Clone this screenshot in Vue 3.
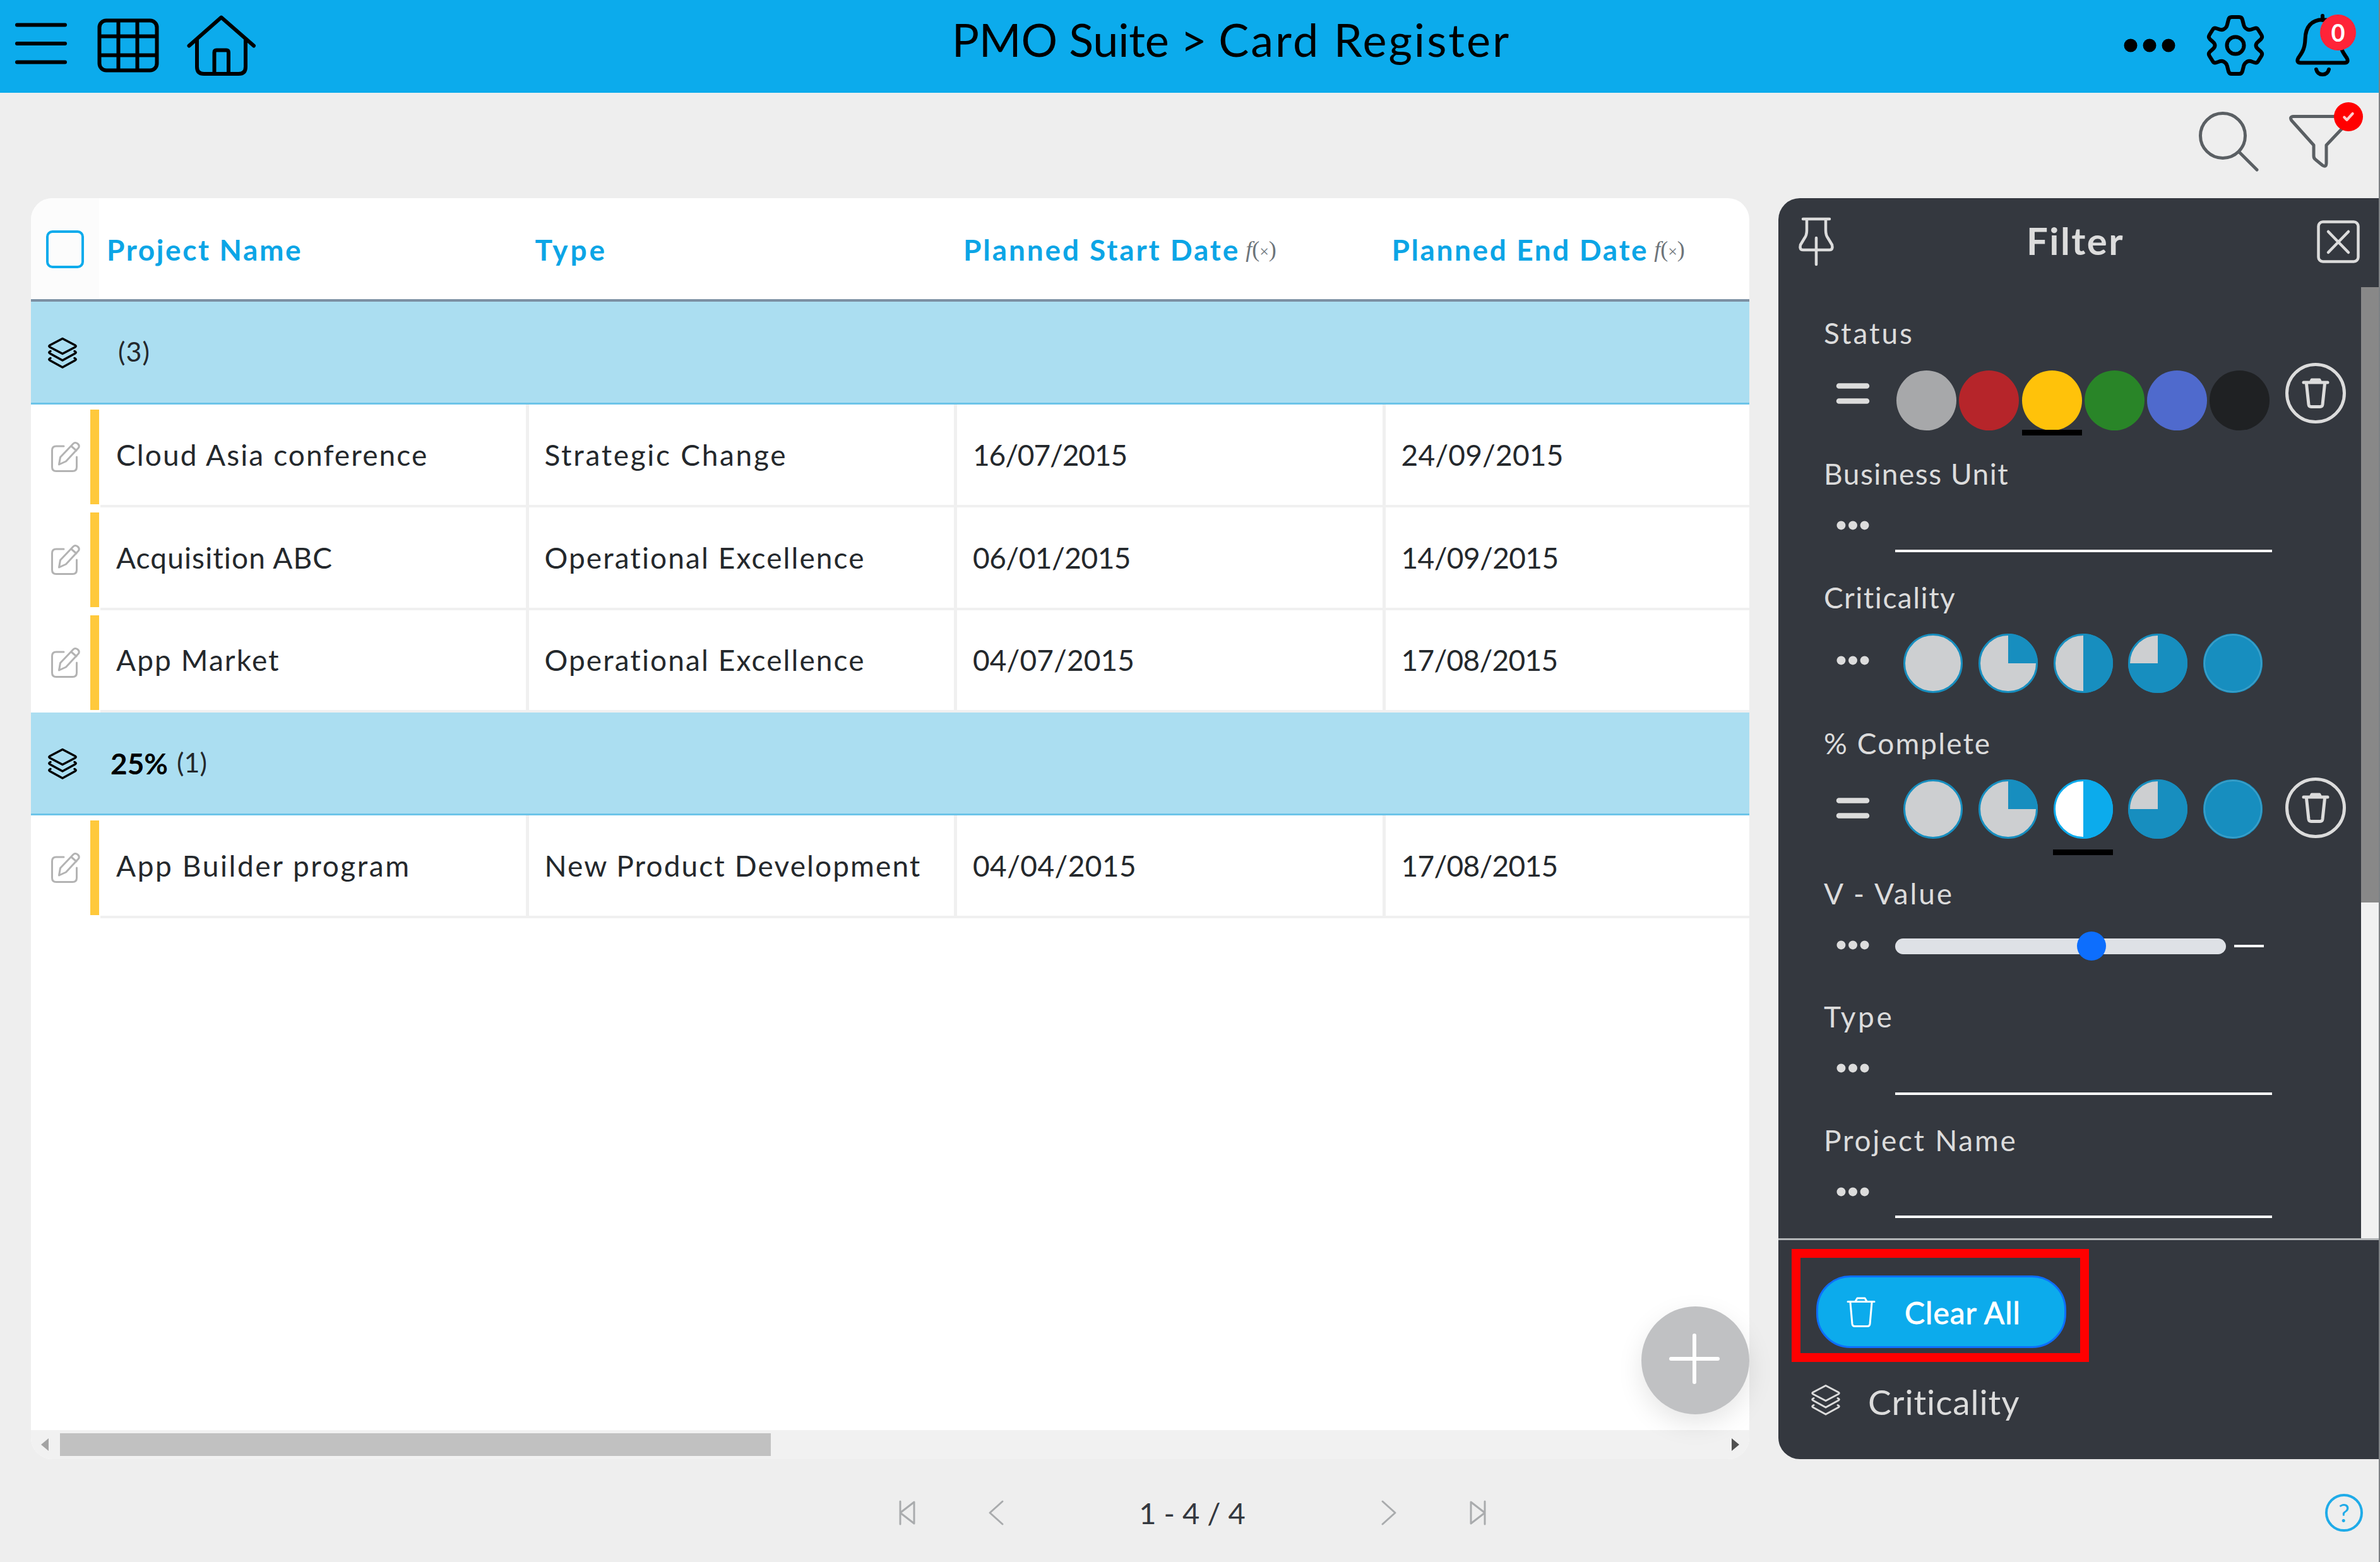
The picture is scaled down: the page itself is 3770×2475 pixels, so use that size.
<template>
  <div class="app">
    <header class="topbar">
      <div class="topbar-left">
        <svg class="ico-menu" viewBox="0 0 82 66"><path d="M3 3.5h76M3 33h76M3 62.5h76" /></svg>
        <svg class="ico-grid" viewBox="0 0 96 84">
          <rect x="2.5" y="2.5" width="91" height="79" rx="11" />
          <path d="M32.5 3v78M62.5 3v78M3 27.5h90M3 57.5h90" />
        </svg>
        <svg class="ico-home" viewBox="0 0 110 98">
          <path d="M3.500 49.500L54.500 4.500L106 49.500M16 40v43q0 11 11 11h55q11 0 11-11V40" />
          <path d="M43.500 94V60q0-3.500 3.500-3.500h15.500q3.500 0 3.500 3.500V94" />
        </svg>
      </div>
      <h1 class="topbar-title"><span class="suite">PMO Suite</span> &gt; <span class="page">Card Register</span></h1>
      <div class="topbar-right">
        <svg class="ico-dots" viewBox="0 0 82 22">
          <circle cx="11" cy="11" r="10.500" /><circle cx="41" cy="11" r="10.500" /><circle cx="71" cy="11" r="10.500" />
        </svg>
        <svg class="ico-gear" viewBox="0 0 90 96">
          <path d="M39 3h12q4 0 5 4l2 8q1 5 6 7.500q3 1.500 8-.500l3-1q4-1.500 6 2l5 8q2.500 4-.500 7l-5 4.500q-3 2.500-3 5.500t3 5.500l5 4.500q3 3 .500 7l-5 8q-2 3.500-6 2l-3-1q-5-2-8-.500q-5 2.500-6 7.500l-2 8q-1 4-5 4H39q-4 0-5-4l-2-8q-1-5-6-7.500q-3-1.500-8 .500l-3 1q-4 1.500-6-2l-5-8q-2.500-4 .500-7l5-4.500q3-2.500 3-5.500t-3-5.500l-5-4.500q-3-3-.500-7l5-8q2-3.500 6-2l3 1q5 2 8 .500q5-2.500 6-7.500l2-8q1-4 5-4z" />
          <circle cx="45" cy="48" r="13.500" />
        </svg>
        <div class="bell">
          <svg class="ico-bell" viewBox="0 0 86 97">
            <path d="M43 1v7M43 7C24 8 16 20 15.500 38C15 54 10 60 4.500 68Q1 75 8 75.500H78Q85 75 81.500 68C76 60 71 54 70.500 38C70 20 62 8 43 7z" />
            <path d="M33 86q2 8 10 8t10-8" />
          </svg>
          <span class="bell-badge">0</span>
        </div>
      </div>
    </header>

    <div class="toolbar">
      <svg class="ico-search" viewBox="0 0 96 96"><circle cx="39" cy="39" r="35.500" /><path d="M65 65L93 93" /></svg>
      <div class="funnel">
        <svg class="ico-funnel" viewBox="0 0 100 86">
          <path d="M7 3.500h87q6 0 2.500 6L59 49v28q0 8-6 4l-11-9q-3-2-3-6V49L4 10Q0 4 7 3.500z" />
        </svg>
        <span class="funnel-badge">
          <svg viewBox="0 0 24 24"><path d="M4 13l5 5L20 6" /></svg>
        </span>
      </div>
    </div>

    <main class="content">
      <section class="register">
        <div class="thead">
          <div class="th-check"><span class="checkbox"></span></div>
          <div v-for="col in columns" :key="col.name" class="th">
            <span :style="{ letterSpacing: col.tracking + 'px' }">{{ col.name }}</span>
            <span v-if="col.formula" class="fx"><i>f</i>(<small>×</small>)</span>
          </div>
        </div>
        <template v-for="group in groups" :key="group.count">
          <div class="group-row">
            <svg class="ico-layers" viewBox="0 0 48 50">
              <path d="M24 2.500L44 13q2.500 1.500 0 3L24 26.500L4 16q-2.500-1.500 0-3z" />
              <path d="M5 22.500l-1 .500q-2.500 1.500 0 3L24 37l20-11q2.500-1.500 0-3l-1-.500" />
              <path d="M5 33.500l-1 .500q-2.500 1.500 0 3L24 48l20-11q2.500-1.500 0-3l-1-.500" />
            </svg>
            <b v-if="group.name" class="group-name">{{ group.name }}</b>
            <span :class="['group-count', { alone: !group.name }]">({{ group.count }})</span>
          </div>
          <div v-for="row in group.rows" :key="row[0]" class="row">
            <div class="row-tools">
              <svg class="ico-edit" viewBox="0 0 48 50">
                <path d="M21 8H9Q2.500 8 2.500 14.500V41q0 6.500 6.500 6.500h26q6.500 0 6.500-6.500V25" />
                <path d="M13.500 37l2-11.500L36 4q3-3 7 0q4 3.500 1 7L24.500 32zM33 8l8 7" />
              </svg>
              <span class="status-bar"></span>
            </div>
            <div v-for="cell in row" :key="cell" class="cell" :style="{ letterSpacing: cellTracking(cell) + 'px' }">{{ cell }}</div>
          </div>
        </template>
        <div class="hscroll">
          <svg class="arrow-left" viewBox="0 0 12 20"><path d="M12 0v20L0 10z" /></svg>
          <span class="hscroll-thumb"></span>
          <svg class="arrow-right" viewBox="0 0 12 20"><path d="M0 0v20L12 10z" /></svg>
        </div>
        <button class="fab">
          <svg viewBox="0 0 80 80"><path d="M40 3v74M3 40h74" /></svg>
        </button>
      </section>

      <aside class="filter">
        <div class="filter-head">
          <svg class="ico-pin" viewBox="0 0 56 78">
            <path d="M7 3h42M13 3v18q0 8-4 13l-6 10q-2 8 4 8h42q6 0 4-8l-6-10q-4-5-4-13V3M28 33v42" />
          </svg>
          <h2 class="filter-title">Filter</h2>
          <svg class="ico-close" viewBox="0 0 68 68">
            <rect x="2.500" y="2.500" width="63" height="63" rx="7" /><path d="M18 18l32 33M50 18L18 51" />
          </svg>
        </div>

        <div class="filter-body">
          <div class="fields">
            <div v-for="field in fields" :key="field.label" class="field">
              <div class="field-label" :style="{ letterSpacing: field.tracking + 'px' }">{{ field.label }}</div>
              <div :class="['control', field.kind]">
                <svg v-if="field.equals" class="op" viewBox="0 0 52 34"><path class="eq" d="M4 4.500h44M4 28.500h44" /></svg>
                <svg v-else class="op" viewBox="0 0 56 16">
                  <circle cx="8" cy="8" r="7.500" /><circle cx="28" cy="8" r="7.500" /><circle cx="48" cy="8" r="7.500" />
                </svg>

                <div v-if="field.kind === 'status'" class="colors">
                  <span v-for="c in statusColors" :key="c" :class="['color', { active: c === '#ffc20a' }]" :style="{ background: c }"></span>
                </div>
                <div v-else-if="field.pies" class="pies">
                  <span v-for="n in 5" :key="n" :class="['pie', { active: field.equals && n === 3 }]">
                    <svg viewBox="0 0 96 96">
                      <circle class="pie-base" cx="48" cy="48" r="45.500" />
                      <path v-if="n > 1 && n < 5" class="pie-fill" :d="pieSlice(n)" />
                      <circle v-if="n === 5" class="pie-fill" cx="48" cy="48" r="46.500" />
                      <circle v-if="n === 5" class="pie-ring" cx="48" cy="48" r="45" />
                    </svg>
                  </span>
                </div>
                <template v-else-if="field.kind === 'slider'">
                  <div class="track"><span class="thumb"></span></div>
                  <span class="track-value"></span>
                </template>
                <div v-else class="line-input"></div>

                <button v-if="field.equals" class="trash">
                  <svg viewBox="0 0 42 48"><path d="M2 7h38M13 7l2-4h12l2 4M6.500 9l3.500 33q.500 3.500 4 3.500h14q3.500 0 4-3.500L35.500 9" /></svg>
                </button>
              </div>
            </div>
          </div>
          <div class="vscroll"><span class="vscroll-thumb"></span></div>
        </div>

        <div class="filter-foot">
          <div class="clear-wrap">
            <button class="clear-btn">
              <svg viewBox="0 0 44 48"><path d="M1 7.500h42M13 7l3-5h12l3 5M5 9l3 34q.500 3.500 4 3.500h20q3.500 0 4-3.500l3-34" /></svg>
              <span>Clear All</span>
            </button>
          </div>
          <div class="grouping">
            <svg class="ico-layers light" viewBox="0 0 48 50">
              <path d="M24 2.500L44 13q2.500 1.500 0 3L24 26.500L4 16q-2.500-1.500 0-3z" />
              <path d="M5 22.500l-1 .500q-2.500 1.500 0 3L24 37l20-11q2.500-1.500 0-3l-1-.500" />
              <path d="M5 33.500l-1 .500q-2.500 1.500 0 3L24 48l20-11q2.500-1.500 0-3l-1-.500" />
            </svg>
            <span>Criticality</span>
          </div>
        </div>
      </aside>
    </main>

    <footer class="footer">
      <nav class="pager">
        <svg viewBox="0 0 26 38"><path d="M2 1v36M24 2v34L2 19z" /></svg>
        <svg viewBox="0 0 26 38"><path d="M23 1L3 19L23 37" /></svg>
        <span class="pager-text">1 - 4 / 4</span>
        <svg viewBox="0 0 26 38"><path d="M3 1L23 19L3 37" /></svg>
        <svg viewBox="0 0 26 38"><path d="M24 1v36M2 2v34L24 19z" /></svg>
      </nav>
      <span class="help">?</span>
    </footer>
  </div>
</template>

<script setup>
const columns = [
  { name: 'Project Name', tracking: 2.6 },
  { name: 'Type', tracking: 4 },
  { name: 'Planned Start Date', tracking: 2.9, formula: true },
  { name: 'Planned End Date', tracking: 2.6, formula: true }
];

const groups = [
  {
    name: '',
    count: 3,
    rows: [
      ['Cloud Asia conference', 'Strategic Change', '16/07/2015', '24/09/2015'],
      ['Acquisition ABC', 'Operational Excellence', '06/01/2015', '14/09/2015'],
      ['App Market', 'Operational Excellence', '04/07/2015', '17/08/2015']
    ]
  },
  {
    name: '25%',
    count: 1,
    rows: [['App Builder program', 'New Product Development', '04/04/2015', '17/08/2015']]
  }
];

// letter spacing in px, 2.1 unless listed
const tracking = {
  'Acquisition ABC': 1.1,
  'App Builder program': 2.6,
  'Strategic Change': 2.7,
  '16/07/2015': -1.1,
  '06/01/2015': -0.5,
  '04/07/2015': 0.1,
  '04/04/2015': 0.4,
  '24/09/2015': 0.2,
  '14/09/2015': -0.6,
  '17/08/2015': -0.7
};
const cellTracking = (text) => tracking[text] ?? 2.1;

const statusColors = ['#a7a8aa', '#b6252a', '#ffc20a', '#298528', '#4f6acd', '#1f2123'];

const fields = [
  { label: 'Status', tracking: 3, kind: 'status', equals: true },
  { label: 'Business Unit', tracking: 1.5, kind: 'text' },
  { label: 'Criticality', tracking: 1.5, kind: 'criticality', pies: true },
  { label: '% Complete', tracking: 2.1, kind: 'complete', pies: true, equals: true },
  { label: 'V - Value', tracking: 2.9, kind: 'slider' },
  { label: 'Type', tracking: 3.6, kind: 'text' },
  { label: 'Project Name', tracking: 2.7, kind: 'text' }
];

// quarter, half and three-quarter slices, clockwise from the top
const pieSlice = (n) => {
  const ends = { 2: '0 0 1 95 48', 3: '0 0 1 48 95', 4: '0 1 1 1 48' };
  return `M48 48V1A47 47 ${ends[n]}z`;
};
</script>

<style>
body {
  margin: 0;
}
</style>

<style scoped>
.app {
  width: 3770px;
  height: 2475px;
  box-sizing: border-box;
  border-right: 2px solid #7d8184;
  background: #eee;
  display: flex;
  flex-direction: column;
  overflow: hidden;
  font-family: Lato, sans-serif;
  font-size: 46px;
  color: #24282c;
}
svg {
  display: block;
  fill: none;
  stroke: currentColor;
  stroke-linecap: round;
  stroke-linejoin: round;
  overflow: visible;
  flex-shrink: 0;
}
button {
  border: 0;
  padding: 0;
  font-family: inherit;
}
h1,
h2 {
  margin: 0;
}

/* top bar */
.topbar {
  height: 147px;
  flex-shrink: 0;
  box-sizing: border-box;
  padding: 0 46px 0 24px;
  background: #0cabec;
  color: #000;
  display: flex;
  justify-content: space-between;
  align-items: flex-start;
  stroke-width: 6px;
}
.topbar-left {
  width: 386px;
  display: flex;
}
.ico-menu {
  width: 82px;
  height: 66px;
  margin-top: 36px;
}
.ico-grid {
  width: 96px;
  height: 84px;
  margin: 30px 0 0 49px;
}
.ico-home {
  width: 110px;
  height: 98px;
  margin: 23px 0 0 45px;
}
.topbar-title {
  font-size: 72px;
  font-weight: 400;
  line-height: 124px;
  margin-left: 127px;
}
.suite {
  letter-spacing: -0.2px;
}
.page {
  letter-spacing: 3px;
}
.topbar-right {
  display: flex;
}
.ico-dots {
  width: 82px;
  height: 22px;
  margin-top: 61px;
  fill: #000;
  stroke: none;
}
.ico-gear {
  width: 90px;
  height: 96px;
  margin: 24px 0 0 50px;
}
.bell {
  position: relative;
  margin: 24px 0 0 50px;
}
.ico-bell {
  width: 86px;
  height: 97px;
}
.bell-badge {
  position: absolute;
  left: 39px;
  top: -1px;
  width: 57px;
  height: 57px;
  border-radius: 50%;
  background: #ff2438;
  color: #fff;
  font-size: 38px;
  font-weight: 700;
  line-height: 57px;
  text-align: center;
}

/* toolbar */
.toolbar {
  height: 167px;
  flex-shrink: 0;
  display: flex;
  justify-content: flex-end;
  color: #5a5f63;
  stroke-width: 5px;
}
.ico-search {
  width: 96px;
  height: 96px;
  margin-top: 29px;
}
.funnel {
  position: relative;
  margin: 34px 42px 0 48px;
}
.ico-funnel {
  width: 100px;
  height: 86px;
}
.funnel-badge {
  position: absolute;
  left: 71px;
  top: -19px;
  width: 46px;
  height: 46px;
  border-radius: 50%;
  background: #f00;
  color: #fff;
  display: flex;
  align-items: center;
  justify-content: center;
}
.funnel-badge svg {
  width: 20px;
  height: 20px;
  opacity: 0.8;
}

/* main area */
.content {
  height: 1998px;
  flex-shrink: 0;
  display: flex;
  justify-content: space-between;
  padding-left: 49px;
}
.register {
  position: relative;
  width: 2722px;
  height: 1998px;
  background: #fff;
  border-radius: 34px;
  display: flex;
  flex-direction: column;
}
.thead {
  height: 164px;
  flex-shrink: 0;
  box-sizing: border-box;
  border-bottom: 4px solid #7c90a3;
  display: flex;
}
.th-check {
  width: 108px;
  background: #fcfcfc;
  border-top-left-radius: 34px;
  box-sizing: border-box;
  padding: 51px 0 0 24px;
}
.checkbox {
  display: block;
  width: 52px;
  height: 52px;
  border: 4px solid #0cabec;
  border-radius: 10px;
}
.th {
  width: 678.5px;
  flex-shrink: 0;
  box-sizing: border-box;
  padding: 2px 0 0 12px;
  display: flex;
  align-items: center;
  color: #0ca5e6;
  font-size: 46px;
  font-weight: 700;
  white-space: nowrap;
}
.th:last-child {
  width: 570px;
}
.fx {
  margin-left: 9px;
  color: #6d747a;
  font-family: "Liberation Serif", serif;
  font-size: 36px;
  font-weight: 400;
}
.fx small {
  font-size: 26px;
}
.group-row {
  height: 163px;
  flex-shrink: 0;
  box-sizing: border-box;
  border-bottom: 3px solid #6cc4e9;
  background: #abdef1;
  display: flex;
  align-items: center;
  padding-left: 26px;
  color: #000;
}
.ico-layers {
  width: 48px;
  height: 50px;
  stroke-width: 3.5px;
  margin-top: 2px;
}
.group-name {
  margin-left: 52px;
}
.group-count {
  font-size: 43px;
  margin: 0 0 3px 14px;
  color: #24282c;
}
.group-count.alone {
  margin-left: 64px;
  letter-spacing: 1px;
}
.row {
  height: 162.8px;
  flex-shrink: 0;
  display: flex;
}
.row-tools {
  width: 108px;
  padding-right: 2px;
  display: flex;
  justify-content: space-between;
}
.ico-edit {
  width: 48px;
  height: 50px;
  margin: 58px 0 0 31px;
  color: #b3b3b3;
  stroke-width: 3px;
}
.status-bar {
  width: 14px;
  height: 150px;
  margin-top: 8px;
  background: #ffc93c;
}
.cell {
  width: 678.5px;
  flex-shrink: 0;
  box-sizing: border-box;
  border-right: 5px solid #f0f0f0;
  border-bottom: 4px solid #f0f0f0;
  padding-left: 25px;
  display: flex;
  align-items: center;
  white-space: nowrap;
}
.cell:last-child {
  width: 576.5px;
  border-right: 0;
}
.hscroll {
  margin-top: auto;
  height: 46px;
  background: #f1f1f1;
  border-radius: 0 0 34px 34px;
  display: flex;
  align-items: center;
}
.arrow-left,
.arrow-right {
  width: 12px;
  height: 20px;
  stroke: none;
  fill: #a3a3a3;
}
.arrow-left {
  margin-left: 16px;
}
.arrow-right {
  margin: 0 16px 0 auto;
  fill: #505050;
}
.hscroll-thumb {
  width: 1126px;
  height: 36px;
  margin-left: 18px;
  background: #c1c1c1;
}
.fab {
  position: absolute;
  right: 0;
  bottom: 71px;
  width: 171px;
  height: 171px;
  border-radius: 50%;
  background: #c0c1c3;
  box-shadow: 0 15px 40px rgba(0, 0, 0, 0.1);
  color: #fff;
  display: flex;
  align-items: center;
  justify-content: center;
}
.fab svg {
  width: 80px;
  height: 80px;
  stroke-width: 6px;
  margin: 0 3px 6px 0;
}

/* filter panel */
.filter {
  width: 951px;
  height: 1998px;
  background: #34383f;
  border-radius: 34px 0 0 34px;
  color: #dcdcdc;
  display: flex;
  flex-direction: column;
}
.filter-head {
  height: 141px;
  flex-shrink: 0;
  box-sizing: border-box;
  padding: 0 30px 4px 32px;
  display: flex;
  justify-content: space-between;
  align-items: center;
  stroke-width: 4.5px;
}
.ico-pin {
  width: 56px;
  height: 78px;
}
.ico-close {
  width: 68px;
  height: 68px;
}
.filter-title {
  font-size: 60px;
  line-height: 80px;
  letter-spacing: 2.4px;
  font-weight: 700;
  margin-bottom: 3px;
}
.filter-body {
  height: 1507px;
  flex-shrink: 0;
  box-sizing: border-box;
  display: flex;
}
.fields {
  flex: 1;
  padding: 42px 24px 0 72px;
}
.field {
  margin-bottom: 30px;
}
.field-label {
  height: 60px;
  line-height: 61px;
}
.control {
  display: flex;
  align-items: center;
  height: 105px;
  padding-left: 20px;
}
.control.text,
.control.slider {
  height: 105.5px;
}
.control.status {
  height: 133px;
}
.control.criticality {
  height: 141px;
}
.control.complete {
  height: 148px;
}
.op {
  width: 52px;
  margin-right: 41px;
  fill: #dcdcdc;
  stroke: none;
}
.eq {
  stroke: #dcdcdc;
  stroke-width: 8.5px;
}
.colors {
  display: flex;
  gap: 4.3px;
  margin: 21px 0 0 2px;
}
.color {
  position: relative;
  width: 95px;
  height: 95px;
  border-radius: 50%;
}
.color.active::after,
.pie.active::after {
  content: "";
  position: absolute;
  left: 0;
  bottom: -8px;
  width: 95px;
  height: 9px;
  background: #000;
}
.pie.active::after {
  bottom: -25px;
}
.pies {
  display: flex;
  gap: 22.8px;
  margin: 2px 0 0 12px;
}
.criticality .pies {
  margin-top: 10px;
}
.pie {
  position: relative;
}
.pie svg {
  width: 96px;
  height: 96px;
}
.pie-base {
  fill: #cdcfd1;
  stroke: #178ebf;
  stroke-width: 3px;
}
.pie-fill {
  fill: #178ebf;
  stroke: none;
}
.pie-ring {
  stroke: #3c9fc8;
  stroke-width: 2px;
}
.active .pie-base {
  fill: #fff;
  stroke: #0cabec;
}
.active .pie-fill {
  fill: #0cabec;
}
.line-input {
  width: 597px;
  height: 84px;
  box-sizing: border-box;
  border-bottom: 4px solid #fff;
}
.track {
  position: relative;
  width: 524px;
  height: 25px;
  border-radius: 13px;
  background: #dee1e6;
  margin-top: 4px;
}
.thumb {
  position: absolute;
  left: 288px;
  top: -11px;
  width: 46px;
  height: 46px;
  border-radius: 50%;
  background: #0d6efd;
}
.track-value {
  width: 47px;
  height: 4px;
  margin: 4px 0 0 13px;
  background: #fff;
}
.trash {
  width: 96px;
  height: 96px;
  margin: 0 0 2px auto;
  box-sizing: border-box;
  border: 5px solid #dcdcdc;
  border-radius: 50%;
  background: none;
  color: #dcdcdc;
  display: flex;
  align-items: center;
  justify-content: center;
}
.trash svg {
  width: 42px;
  height: 48px;
  stroke-width: 5px;
}
.vscroll {
  width: 28px;
  background: #f1f1f1;
}
.vscroll-thumb {
  display: block;
  height: 975px;
  background: #888;
}
.filter-foot {
  flex: 1;
  border-top: 3px solid #b3b6b8;
  padding: 14px 0 0 21px;
}
.clear-wrap {
  width: 471px;
  height: 179px;
  box-sizing: border-box;
  border: 14px solid #f00;
  padding: 28px 0 0 25px;
}
.clear-btn {
  width: 396px;
  height: 115px;
  box-sizing: border-box;
  border: 3px solid #0d6efd;
  border-radius: 54px;
  background: #0cabec;
  color: #fff;
  display: flex;
  align-items: center;
  padding-left: 46px;
  font-size: 48px;
  line-height: 60px;
  letter-spacing: 1px;
  font-weight: 400;
  -webkit-text-stroke: 0.8px #fff;
}
.clear-btn svg {
  width: 44px;
  height: 48px;
  stroke-width: 3px;
  margin-right: 47px;
}
.clear-btn span {
  margin-top: 3px;
}
.grouping {
  display: flex;
  align-items: center;
  height: 80px;
  margin-top: 23px;
  padding-left: 30px;
  font-size: 55px;
  letter-spacing: 0.9px;
}
.ico-layers.light {
  margin: 0 43px 6px 0;
  stroke-width: 3px;
}

/* footer */
.footer {
  flex: 1;
  display: grid;
  grid-template-columns: 1fr auto 1fr;
  align-items: center;
  padding-top: 7px;
}
.pager {
  grid-column: 2;
  display: flex;
  align-items: center;
  padding-left: 9px;
  color: #a9abad;
  stroke-width: 3px;
}
.pager svg {
  width: 26px;
  height: 38px;
}
.pager svg + svg {
  margin-left: 115px;
}
.pager-text {
  width: 596px;
  text-align: center;
  font-size: 47px;
  color: #34383f;
}
.help {
  justify-self: end;
  width: 60px;
  height: 60px;
  box-sizing: border-box;
  margin-right: 25px;
  border: 4px solid #1fabe8;
  border-radius: 50%;
  color: #1fabe8;
  font-size: 40px;
  line-height: 52px;
  text-align: center;
}
</style>
